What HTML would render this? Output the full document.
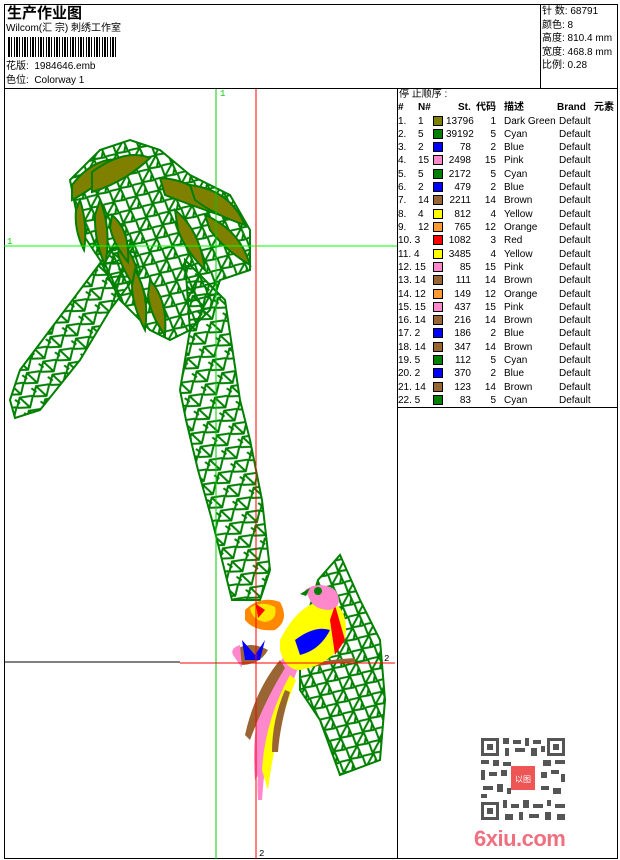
<!DOCTYPE html>
<html><head><meta charset="utf-8"><style>
*{margin:0;padding:0;box-sizing:border-box}
body{width:620px;height:860px;background:#fff;font-family:"Liberation Sans","Noto Sans CJK SC",sans-serif;color:#000;position:relative;overflow:hidden}
.a{position:absolute}
.t{font-size:10px;white-space:nowrap;line-height:12px}
.row{position:absolute;left:398px;font-size:10px;height:13px;line-height:13px;white-space:nowrap}
.row span{position:absolute}
.sw{width:10px;height:10px;border:1px solid #000;top:1px}
</style></head><body>
<div class="a" style="left:4px;top:4px;width:614px;height:855px;border:1px solid #000"></div>
<div class="a" style="left:4px;top:88px;width:614px;height:1px;background:#000"></div>
<div class="a" style="left:540px;top:4px;width:1px;height:84px;background:#000"></div>
<div class="a" style="left:397px;top:88px;width:1px;height:771px;background:#000"></div>
<div class="a" style="left:397px;top:407px;width:221px;height:1px;background:#000"></div>

<div class="a" style="left:7px;top:4px;font-size:15px;font-weight:bold;line-height:20px">生产作业图</div>
<div class="a t" style="left:6px;top:23px">Wilcom(汇 宗) 刺绣工作室</div>
<div class="a" style="left:8px;top:37px;width:110px;height:20px;background:repeating-linear-gradient(90deg,#000 0 2px,#fff 2px 3px,#000 3px 4px,#fff 4px 6px,#000 6px 7px,#fff 7px 8px)"></div>
<div class="a t" style="left:6px;top:61px">花版:&nbsp; 1984646.emb</div>
<div class="a t" style="left:6px;top:75px">色位:&nbsp; Colorway 1</div>
<div class="a t" style="left:542px;top:5px;line-height:13.6px">针 数: 68791<br>颜色: 8<br>高度: 810.4 mm<br>宽度: 468.8 mm<br>比例: 0.28</div>

<div class="a t" style="left:399px;top:89px">停 止顺序 :</div>
<div class="a t" style="left:398px;top:102px;font-weight:bold;text-decoration:underline;width:220px">
<span class="a" style="left:0">#</span><span class="a" style="left:20px">N#</span><span class="a" style="left:60px">St.</span><span class="a" style="left:78px">代码</span><span class="a" style="left:106px">描述</span><span class="a" style="left:159px">Brand</span><span class="a" style="left:196px">元素</span></div>

<svg class="a" style="left:4px;top:89px" width="393" height="770" viewBox="4 89 393 770">
<defs>
<pattern id="m" width="20" height="16" patternUnits="userSpaceOnUse" patternTransform="rotate(-35)">
<path d="M0 8 L8 1 L20 7 M0 8 L11 15 L20 7 M8 1 L11 15 M3 0 L5 6" stroke="#008000" stroke-width="2" fill="none"/>
</pattern>
<pattern id="m2" width="18" height="15" patternUnits="userSpaceOnUse" patternTransform="rotate(25)">
<path d="M0 7 L9 0 L18 8 M0 7 L8 15 L18 8 M9 0 L8 15 M13 3 L15 11" stroke="#008000" stroke-width="2" fill="none"/>
</pattern>
</defs>
<g stroke="#008000" stroke-width="2">
<path d="M10 400 L20 370 L50 330 L80 290 L110 250 L130 240 L140 270 L110 310 L80 360 L40 410 L15 418 Z" fill="url(#m)"/>
<path d="M70 180 L100 150 L130 140 L160 150 L190 175 L230 195 L250 230 L250 270 L220 280 L210 310 L190 330 L170 340 L150 330 L120 300 L100 260 L80 230 Z" fill="url(#m2)"/>
<path d="M185 260 L225 300 L240 400 L250 440 L262 500 L270 570 L260 600 L232 600 L222 560 L212 520 L198 470 L186 420 L180 390 L190 330 Z" fill="url(#m)"/>
<path d="M300 640 L318 580 L340 555 L360 600 L380 640 L385 700 L380 760 L340 775 L320 720 L300 690 Z" fill="url(#m2)"/>
</g>
<g fill="#808000" stroke="#008000" stroke-width="2">
<path d="M72 185 Q95 155 125 160 Q100 185 72 200Z"/>
<path d="M92 172 Q125 148 150 158 Q125 182 92 192Z"/>
<path d="M160 178 Q200 180 220 215 Q190 205 165 195Z"/>
<path d="M190 185 Q230 190 245 225 Q215 215 195 200Z"/>
<path d="M205 215 Q240 230 250 265 Q225 250 210 230Z"/>
<path d="M100 200 Q112 230 105 265 Q94 240 95 215Z"/>
<path d="M80 200 Q88 225 84 250 Q74 230 76 210Z"/>
<path d="M120 240 Q140 260 140 295 Q125 275 118 255Z"/>
<path d="M135 270 Q150 295 145 330 Q132 305 132 285Z"/>
<path d="M150 280 Q168 300 165 335 Q150 315 148 295Z"/>
<path d="M175 210 Q200 230 205 270 Q185 250 178 230Z"/>
<path d="M112 215 Q130 230 128 262 Q114 245 110 228Z"/>
</g>
<g>
<path d="M290 670 Q320 662 355 660" stroke="#996633" stroke-width="4" fill="none"/>
<path d="M255 780 Q250 720 270 680 Q285 650 300 640 L305 650 Q285 700 268 760Z" fill="#ff88cc"/>
<path d="M245 735 Q255 690 280 660 L285 668 Q265 700 250 740Z" fill="#996633"/>
<path d="M258 800 Q255 750 272 700 L278 702 Q265 750 262 800Z" fill="#ff88cc"/>
<path d="M262 770 Q265 720 290 675 L296 680 Q275 730 268 790Z" fill="#ffff00"/>
<path d="M272 752 Q272 720 285 690 L290 692 Q280 725 278 752Z" fill="#996633"/>
<path d="M280 640 Q300 600 330 600 Q350 610 345 640 Q330 665 300 670 Q285 670 280 650Z" fill="#ffff00"/>
<path d="M295 640 Q315 625 330 630 Q320 650 300 655Z" fill="#0000ff"/>
<path d="M335 605 L345 640 L335 655 L330 620Z" fill="#ff0000"/>
<path d="M305 590 Q320 580 335 590 Q345 605 330 610 Q315 610 310 600Z" fill="#ff88cc"/>
<circle cx="318" cy="591" r="4" fill="#008000"/>
<path d="M300 594 L310 588 L306 596Z" fill="#008000"/>
<path d="M245 610 Q260 595 280 602 Q290 620 275 630 Q255 632 245 620Z" fill="#ff8800"/>
<path d="M250 608 Q262 600 275 607 Q278 620 265 622 Q252 620 250 608Z" fill="#ffff00" opacity=".8"/>
<path d="M256 604 L265 610 L258 618Z" fill="#ff0000"/>
<path d="M235 650 Q250 640 268 650 Q260 665 240 665Z" fill="#996633"/>
<path d="M233 655 Q230 648 240 645 L242 668Z" fill="#ff88cc"/>
<path d="M242 640 L255 655 L265 640 L260 660 L245 660Z" fill="#0000ff"/>
</g>
<line x1="216" y1="89" x2="216" y2="859" stroke="#00cc00"/>
<line x1="256" y1="89" x2="256" y2="859" stroke="#ff0000"/>
<line x1="4" y1="246" x2="397" y2="246" stroke="#00ff00"/>
<line x1="4" y1="662" x2="180" y2="662" stroke="#000"/>
<line x1="180" y1="663" x2="395" y2="663" stroke="#ff0000"/>
<text x="220" y="96" font-size="9" fill="#00cc00" font-family="Liberation Mono">1</text>
<text x="7" y="244" font-size="9" fill="#00cc00" font-family="Liberation Mono">1</text>
<text x="384" y="661" font-size="9" fill="#000" font-family="Liberation Mono">2</text>
<text x="259" y="856" font-size="9" fill="#000" font-family="Liberation Mono">2</text>
</svg>

<div class="row" style="top:115px"><span style="left:0">1.</span><span style="left:20px">1</span><span class="sw" style="left:35px;background:#808000"></span><span style="left:48px;width:25px;text-align:right">13796</span><span style="left:78px;width:20px;text-align:right">1</span><span style="left:106px">Dark Green</span><span style="left:161px">Default</span></div>
<div class="row" style="top:128px"><span style="left:0">2.</span><span style="left:20px">5</span><span class="sw" style="left:35px;background:#008000"></span><span style="left:48px;width:25px;text-align:right">39192</span><span style="left:78px;width:20px;text-align:right">5</span><span style="left:106px">Cyan</span><span style="left:161px">Default</span></div>
<div class="row" style="top:141px"><span style="left:0">3.</span><span style="left:20px">2</span><span class="sw" style="left:35px;background:#0000ff"></span><span style="left:48px;width:25px;text-align:right">78</span><span style="left:78px;width:20px;text-align:right">2</span><span style="left:106px">Blue</span><span style="left:161px">Default</span></div>
<div class="row" style="top:154px"><span style="left:0">4.</span><span style="left:20px">15</span><span class="sw" style="left:35px;background:#ff88cc"></span><span style="left:48px;width:25px;text-align:right">2498</span><span style="left:78px;width:20px;text-align:right">15</span><span style="left:106px">Pink</span><span style="left:161px">Default</span></div>
<div class="row" style="top:168px"><span style="left:0">5.</span><span style="left:20px">5</span><span class="sw" style="left:35px;background:#008000"></span><span style="left:48px;width:25px;text-align:right">2172</span><span style="left:78px;width:20px;text-align:right">5</span><span style="left:106px">Cyan</span><span style="left:161px">Default</span></div>
<div class="row" style="top:181px"><span style="left:0">6.</span><span style="left:20px">2</span><span class="sw" style="left:35px;background:#0000ff"></span><span style="left:48px;width:25px;text-align:right">479</span><span style="left:78px;width:20px;text-align:right">2</span><span style="left:106px">Blue</span><span style="left:161px">Default</span></div>
<div class="row" style="top:194px"><span style="left:0">7.</span><span style="left:20px">14</span><span class="sw" style="left:35px;background:#996633"></span><span style="left:48px;width:25px;text-align:right">2211</span><span style="left:78px;width:20px;text-align:right">14</span><span style="left:106px">Brown</span><span style="left:161px">Default</span></div>
<div class="row" style="top:208px"><span style="left:0">8.</span><span style="left:20px">4</span><span class="sw" style="left:35px;background:#ffff00"></span><span style="left:48px;width:25px;text-align:right">812</span><span style="left:78px;width:20px;text-align:right">4</span><span style="left:106px">Yellow</span><span style="left:161px">Default</span></div>
<div class="row" style="top:221px"><span style="left:0">9.</span><span style="left:20px">12</span><span class="sw" style="left:35px;background:#ff9933"></span><span style="left:48px;width:25px;text-align:right">765</span><span style="left:78px;width:20px;text-align:right">12</span><span style="left:106px">Orange</span><span style="left:161px">Default</span></div>
<div class="row" style="top:234px"><span style="left:0">10. 3</span><span class="sw" style="left:35px;background:#ff0000"></span><span style="left:48px;width:25px;text-align:right">1082</span><span style="left:78px;width:20px;text-align:right">3</span><span style="left:106px">Red</span><span style="left:161px">Default</span></div>
<div class="row" style="top:248px"><span style="left:0">11. 4</span><span class="sw" style="left:35px;background:#ffff00"></span><span style="left:48px;width:25px;text-align:right">3485</span><span style="left:78px;width:20px;text-align:right">4</span><span style="left:106px">Yellow</span><span style="left:161px">Default</span></div>
<div class="row" style="top:261px"><span style="left:0">12. 15</span><span class="sw" style="left:35px;background:#ff88cc"></span><span style="left:48px;width:25px;text-align:right">85</span><span style="left:78px;width:20px;text-align:right">15</span><span style="left:106px">Pink</span><span style="left:161px">Default</span></div>
<div class="row" style="top:274px"><span style="left:0">13. 14</span><span class="sw" style="left:35px;background:#996633"></span><span style="left:48px;width:25px;text-align:right">111</span><span style="left:78px;width:20px;text-align:right">14</span><span style="left:106px">Brown</span><span style="left:161px">Default</span></div>
<div class="row" style="top:288px"><span style="left:0">14. 12</span><span class="sw" style="left:35px;background:#ff9933"></span><span style="left:48px;width:25px;text-align:right">149</span><span style="left:78px;width:20px;text-align:right">12</span><span style="left:106px">Orange</span><span style="left:161px">Default</span></div>
<div class="row" style="top:301px"><span style="left:0">15. 15</span><span class="sw" style="left:35px;background:#ff88cc"></span><span style="left:48px;width:25px;text-align:right">437</span><span style="left:78px;width:20px;text-align:right">15</span><span style="left:106px">Pink</span><span style="left:161px">Default</span></div>
<div class="row" style="top:314px"><span style="left:0">16. 14</span><span class="sw" style="left:35px;background:#996633"></span><span style="left:48px;width:25px;text-align:right">216</span><span style="left:78px;width:20px;text-align:right">14</span><span style="left:106px">Brown</span><span style="left:161px">Default</span></div>
<div class="row" style="top:327px"><span style="left:0">17. 2</span><span class="sw" style="left:35px;background:#0000ff"></span><span style="left:48px;width:25px;text-align:right">186</span><span style="left:78px;width:20px;text-align:right">2</span><span style="left:106px">Blue</span><span style="left:161px">Default</span></div>
<div class="row" style="top:341px"><span style="left:0">18. 14</span><span class="sw" style="left:35px;background:#996633"></span><span style="left:48px;width:25px;text-align:right">347</span><span style="left:78px;width:20px;text-align:right">14</span><span style="left:106px">Brown</span><span style="left:161px">Default</span></div>
<div class="row" style="top:354px"><span style="left:0">19. 5</span><span class="sw" style="left:35px;background:#008000"></span><span style="left:48px;width:25px;text-align:right">112</span><span style="left:78px;width:20px;text-align:right">5</span><span style="left:106px">Cyan</span><span style="left:161px">Default</span></div>
<div class="row" style="top:367px"><span style="left:0">20. 2</span><span class="sw" style="left:35px;background:#0000ff"></span><span style="left:48px;width:25px;text-align:right">370</span><span style="left:78px;width:20px;text-align:right">2</span><span style="left:106px">Blue</span><span style="left:161px">Default</span></div>
<div class="row" style="top:381px"><span style="left:0">21. 14</span><span class="sw" style="left:35px;background:#996633"></span><span style="left:48px;width:25px;text-align:right">123</span><span style="left:78px;width:20px;text-align:right">14</span><span style="left:106px">Brown</span><span style="left:161px">Default</span></div>
<div class="row" style="top:394px"><span style="left:0">22. 5</span><span class="sw" style="left:35px;background:#008000"></span><span style="left:48px;width:25px;text-align:right">83</span><span style="left:78px;width:20px;text-align:right">5</span><span style="left:106px">Cyan</span><span style="left:161px">Default</span></div>

<svg class="a" style="left:481px;top:738px" width="86" height="84" viewBox="0 0 86 84">
<rect x="0" y="0" width="84" height="82" fill="#fff"/>
<g fill="#555">
<rect x="0" y="0" width="18" height="18"/><rect x="3" y="3" width="12" height="12" fill="#fff"/><rect x="6" y="6" width="6" height="6"/>
<rect x="66" y="0" width="18" height="18"/><rect x="69" y="3" width="12" height="12" fill="#fff"/><rect x="72" y="6" width="6" height="6"/>
<rect x="0" y="64" width="18" height="18"/><rect x="3" y="67" width="12" height="12" fill="#fff"/><rect x="6" y="70" width="6" height="6"/>
<path d="M22 0h6v6h-6zM32 2h8v4h-8zM44 0h4v8h-4zM52 2h8v4h-8zM24 10h4v8h-4zM34 10h10v4h-10zM50 10h6v8h-6zM60 8h4v6h-4zM0 22h8v4h-8zM12 22h6v6h-6zM22 24h8v4h-8zM62 22h8v6h-8zM74 22h10v4h-10zM0 32h4v10h-4zM8 34h8v4h-8zM20 32h6v6h-6zM60 34h6v6h-6zM70 32h8v4h-8zM80 36h4v8h-4zM2 48h10v4h-10zM16 46h6v8h-6zM26 50h4v6h-4zM60 48h8v4h-8zM72 50h8v6h-8zM0 56h6v4h-6zM22 62h4v8h-4zM30 66h8v4h-8zM42 62h6v8h-6zM52 66h10v4h-10zM66 62h4v6h-4zM74 66h10v4h-10zM24 76h8v6h-8zM38 74h4v8h-4zM48 76h10v4h-10zM64 74h6v8h-6zM76 76h8v6h-8z"/>
</g>
<rect x="30" y="28" width="24" height="24" fill="#ee5555"/>
<text x="42" y="44" font-size="8" fill="#fff" text-anchor="middle" font-family="Noto Sans CJK SC,sans-serif">以图</text>
</svg>
<div class="a" style="left:474px;top:826px;font-size:22px;font-weight:bold;color:#f07080;letter-spacing:-0.5px;line-height:26px;font-family:'Liberation Sans',sans-serif">6xiu.com</div>
</body></html>
